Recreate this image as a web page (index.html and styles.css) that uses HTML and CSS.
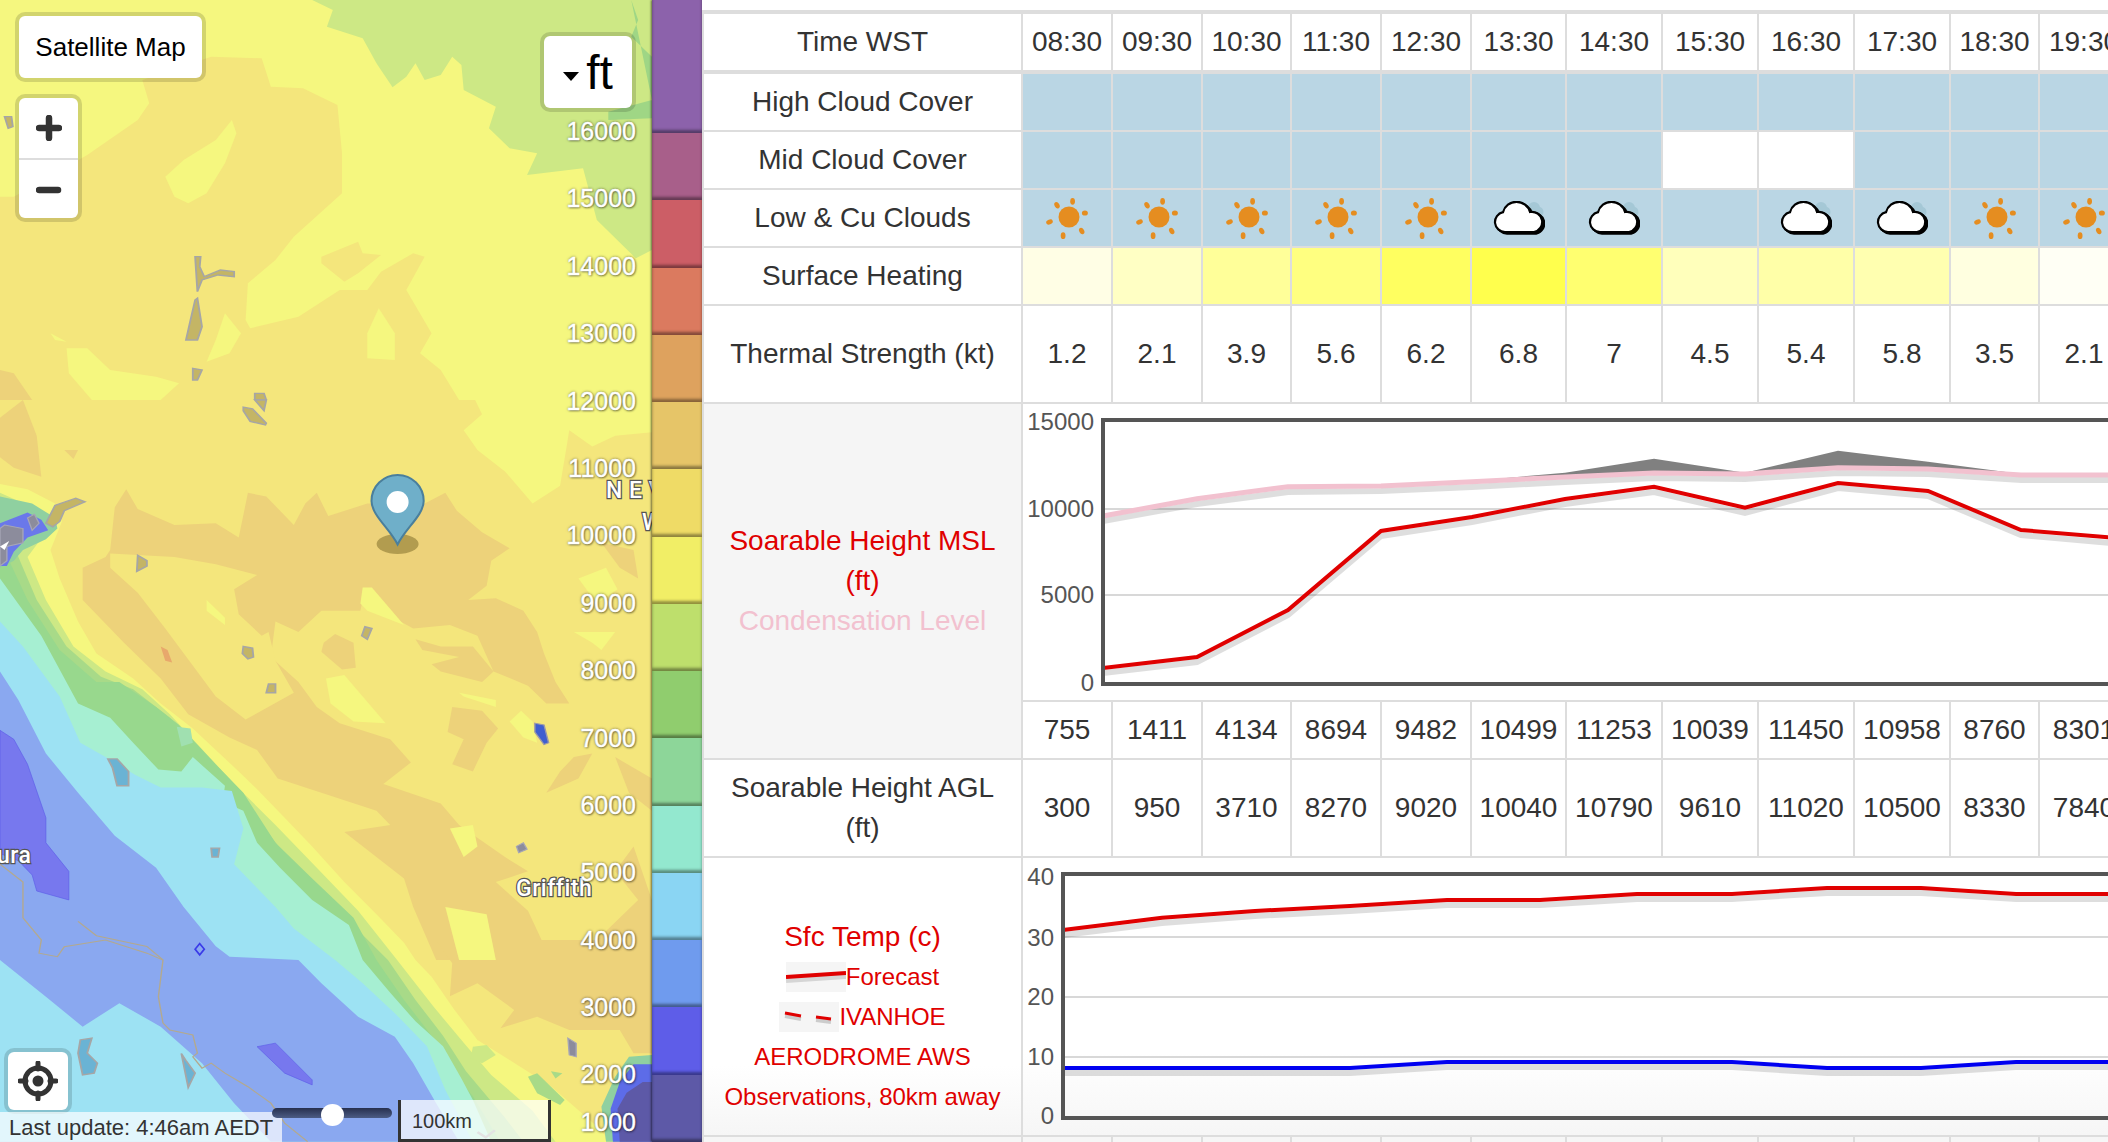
FILE: index.html
```html
<!DOCTYPE html>
<html lang="en">

<head>
	<meta charset="UTF-8">
	<title>Soaring Forecast</title>
	<link rel="stylesheet" href="styles.css">
</head>

<body>
	<svg class="defs" width="0" height="0">
		<symbol id="sun" viewBox="-2 1 50 50">
			<circle cx="25" cy="25" r="10.5" fill="#e58d20" />
			<g fill="#e58d20">
				<ellipse cx="28.6" cy="9.3" rx="2.4" ry="3.4" />
				<ellipse cx="13" cy="13.3" rx="2.4" ry="3.4" transform="rotate(-30 13 13.3)" />
				<ellipse cx="40.9" cy="21" rx="3" ry="2.6" />
				<ellipse cx="5.5" cy="30" rx="3.4" ry="2.4" transform="rotate(-20 5.5 30)" />
				<ellipse cx="37.7" cy="39" rx="2.4" ry="3.4" transform="rotate(-30 37.7 39)" />
				<ellipse cx="19.1" cy="43.7" rx="2.4" ry="3.4" />
			</g>
		</symbol>
		<symbol id="cloud" viewBox="0 0 52 34">
			<circle cx="41" cy="7" r="6" fill="#a5c8d6" />
			<circle cx="45" cy="11" r="5.5" fill="#a5c8d6" />
			<path d="M12 31a10 10 0 0 1-2-19.8A14 14 0 0 1 37 11a10 10 0 0 1 4 20z" fill="#000" stroke="#000" stroke-width="2.4" transform="translate(2 1.5)" />
			<path d="M12 31a10 10 0 0 1-2-19.8A14 14 0 0 1 37 11a10 10 0 0 1 4 20z" fill="#fff" stroke="#000" stroke-width="2.2" />
		</symbol>
	</svg>

	<div class="page">
		<div class="map">
			<svg class="map-canvas" viewBox="0 0 703 1142" width="703" height="1142">
				<rect width="703" height="1142" fill="#f5f77f" />

				<g class="soft" transform="scale(.4591,.3333)">
					<polygon fill="#cde885" points="680,0 725,30 712,80 790,115 820,190 855,262 885,230 905,190 925,240 960,225 985,170 1005,195 1010,270 1080,320 1065,385 1110,445 1170,460 1148,525 1270,505 1300,660 1385,775 1420,750 1420,0" />
					<polygon fill="#9fd685" points="1375,0 1390,60 1375,110 1420,170 1420,355 1325,360 1325,335 1420,300" />
					<polygon class="oy" points="0,590 30,590 190,465 300,360 325,310 310,240 460,170 570,175 590,260 660,265 735,315 745,460 745,580 640,710 600,780 540,850 535,960 545,985 650,950 740,870 800,870 830,815 900,760 925,770 885,870 940,1000 915,1060 960,1110 1000,1200 0,1200" />
					<polygon class="yl" points="505,360 515,400 490,490 450,580 410,610 380,590 360,530 400,480 470,420" />
					<polygon class="yl" points="145,1045 190,1045 240,1110 340,1130 390,1150 350,1200 200,1200 150,1120" />
					<polygon class="yl" points="110,1000 145,1025 120,1020" />
					<polygon class="yl" points="490,940 525,1000 500,1060 450,1085 470,1020" />
					<polygon class="yl" points="825,925 860,1000 860,1080 800,1075 800,1000" />
					<polygon class="oy" points="700,770 780,725 790,760 830,765 780,820 750,845 700,790" />
					<polygon class="or" points="0,1110 30,1120 70,1200 0,1200" />
					<polygon class="lake" points="425,770 437,770 435,800 445,830 480,810 510,815 510,830 475,825 440,840 430,875" />
					<polygon class="lake" points="425,900 430,895 440,980 430,1020 405,1020 415,960" />
					<polygon class="lake" points="420,1105 440,1110 430,1140 420,1140" />
					<polygon class="lake" points="555,1180 575,1180 580,1200 555,1200" />
					<polygon class="lake" points="10,350 25,350 28,380 18,385" />
				</g>

				<g class="soft" transform="translate(0,400) scale(.4591,.3571)">
					<polygon class="oy" points="0,0 1420,0 1420,2077 1330,2077 1300,2034 1200,1922 1110,1848 1040,1792 990,1708 940,1615 905,1568 880,1520 820,1440 750,1350 680,1250 620,1170 560,1090 520,1040 470,980 420,920 350,850 290,780 210,710 170,620 130,500 110,420 135,340 120,290 60,250 0,235" />
					<polygon class="yl" points="1035,0 1050,40 1010,85 1040,140 1100,200 1160,290 1220,240 1240,85 1290,130 1340,100 1420,90 1420,0" />
					<polygon class="or" points="0,50 50,0 80,100 90,215 30,190 0,160" />
					<polygon class="or" points="250,300 275,250 300,305 380,350 470,345 520,385 540,260 580,270 640,350 665,290 690,260 715,325 800,290 925,290 970,260 995,310 1050,370 1110,415 1070,450 1060,520 1020,560 1080,555 1140,590 1170,650 1185,710 1210,790 1240,850 1190,850 1150,800 1075,760 1040,660 980,630 900,640 830,590 790,560 785,590 700,590 650,650 600,620 590,720 650,790 690,860 740,905 850,950 895,1015 835,1075 960,1130 1000,1190 1100,1280 1150,1320 1080,1350 1150,1430 1200,1568 950,1568 900,1420 880,1340 750,1210 850,1190 820,1150 700,1100 605,1060 560,980 500,945 410,880 350,780 270,680 180,560 180,470 230,440 240,420" />
					<polygon class="oy" points="240,430 380,440 470,460 560,490 510,530 520,600 570,660 585,650 600,730 640,820 535,895 470,830 360,640 300,540 240,470" />
					<polygon class="or" points="705,680 730,655 770,680 775,750 745,755 700,705" />
					<polygon class="or" points="905,670 960,690 1030,690 1075,760 1050,790 960,760 940,740 1000,720 920,700" />
					<polygon class="or" points="985,860 1050,870 1085,920 1060,960 1030,1040 985,1020 1010,950 975,930" />
					<polygon class="or" points="1340,1000 1420,1060 1420,1150 1370,1100" />
					<polygon class="or" points="1250,1000 1290,990 1260,1060 1190,1100 1220,1040" />
					<polygon class="or" points="1310,400 1380,420 1390,500 1350,470" />
					<polygon class="or" points="140,140 170,140 160,165" />
					<polygon class="or" points="950,1512 985,1577 980,1670 1040,1633 1120,1708 1090,1759 1170,1727 1240,1764 1350,1764 1380,1829 1420,1829 1420,1400 1380,1250 1340,1320 1390,1400 1300,1512" />
					<polygon class="yl" points="710,780 750,770 840,905 770,900 720,850" />
					<polygon class="yl" points="790,525 810,525 880,630 800,590 785,570" />
					<polygon class="yl" points="1110,900 1135,870 1160,900 1170,960 1140,945" />
					<polygon class="yl" points="980,1200 1030,1190 1040,1250 1010,1280" />
					<polygon class="yl" points="1260,500 1320,470 1345,530 1300,570" />
					<polygon class="yl" points="1250,650 1340,650 1310,700 1290,680" />
					<polygon class="yl" points="1000,820 1080,840 1080,860 1010,830" />
					<polygon class="yl" points="970,1420 1060,1440 1080,1568 1000,1568" />
					<polygon class="yl" points="450,560 490,610 490,630 450,590" />
					<polygon fill="#e8a86c" points="350,690 365,700 375,735 360,730" />

					<polygon fill="#cde885" points="0,260 70,300 100,370 60,440 100,560 160,690 230,760 310,810 370,880 420,950 510,1075 600,1190 690,1310 780,1430 865,1568 945,1700 1010,1800 1070,1890 1160,1990 1210,2077 0,2077" />
					<polygon fill="#a8da88" points="0,290 40,440 80,560 145,690 220,775 290,810 340,860 370,890 415,960 500,1080 570,1190 650,1320 745,1440 845,1568 905,1680 965,1780 1015,1880 1100,2010 1140,2077 0,2077" />
					<polygon fill="#98d88d" points="20,450 60,560 130,700 210,790 260,790 340,860 390,910 470,1020 530,1100 600,1240 680,1340 770,1450 820,1568 880,1680 940,1780 985,1880 1030,1950 1090,2077 0,2077 0,450" />
					<polygon fill="#a6efd2" points="0,500 90,660 170,850 240,890 290,960 345,1035 395,1040 420,1000 490,1080 485,1125 530,1150 560,1240 610,1310 680,1400 760,1470 790,1568 850,1660 905,1740 965,1810 1005,1900 1030,1960 1070,2077 0,2077" />
					<polygon fill="#a0e0b0" points="385,915 415,920 420,960 395,970" />
					<polygon fill="#9de2f3" points="0,620 50,690 130,830 175,960 230,1000 295,1050 350,1085 440,1085 505,1095 530,1200 510,1300 600,1420 640,1480 730,1568 790,1633 860,1717 930,1810 970,1932 1000,2006 1030,2077 0,2077" />
					<polygon fill="#8aa8f0" points="0,760 40,840 100,990 170,1100 250,1220 340,1310 400,1420 470,1530 500,1559 650,1568 700,1633 780,1727 860,1783 900,1857 950,1969 1000,2077 0,2077" />
					<polygon fill="#9de2f3" points="0,1568 100,1671 180,1755 260,1689 350,1755 440,1857 510,1969 590,2077 0,2077" />
					<polygon class="deep" points="0,925 30,950 60,1020 100,1170 100,1240 150,1320 150,1400 80,1375 70,1330 40,1290 0,1270" />
					<polygon class="deep" points="560,1811 600,1801 680,1904 680,1918 620,1885" />

					<polygon fill="#cde885" points="1030,1811 1060,1806 1080,1834 1050,1857 1025,1843" />
					<polygon fill="#a8da88" points="1150,1895 1170,1885 1230,1960 1220,1974 1170,1941" />
					<polygon fill="#a8da88" points="1200,1880 1225,1885 1210,1900" />

					<polygon fill="#8fd0a0" points="1370,1839 1420,1834 1420,2077 1320,2077 1310,1979 1340,1895" />
					<polygon fill="#5d6ce8" points="1380,1860 1420,1860 1420,2077 1335,2077 1330,1985 1350,1910" />
					<polygon fill="#5d59a7" points="1400,1910 1420,1910 1420,2077 1350,2077 1345,1985 1365,1940" />

					<polygon fill="#8fd0a0" points="0,270 70,290 120,330 125,360 100,390 50,420 30,450 0,470" />
					<polygon fill="#6a78ea" points="0,345 60,315 90,335 105,365 60,385 30,425 15,465 0,465" />
					<polygon class="gray" points="10,350 50,360 50,400 15,410 15,450 0,465 0,360" />
					<polygon class="gray" points="60,330 75,320 85,345 70,365" />
					<polygon class="lake" points="120,295 165,275 185,285 140,310 130,340 115,355 100,345" />
					<polygon fill="#fff" points="0,410 20,395 10,420" />

					<polygon class="lake" points="300,435 320,450 320,465 298,480" />
					<polygon class="lake" points="530,690 550,695 552,720 540,725 528,710" />
					<polygon class="lake" points="585,795 600,795 600,820 580,820" />
					<polygon class="lake" points="795,635 810,640 800,670 788,660" />
					<polygon class="lake" points="530,20 550,25 580,65 578,70 545,60 530,30" />
					<polygon class="lake" points="555,0 580,0 575,30" />
					<polygon fill="#3f5fd0" stroke="#99a" stroke-width="3" points="1165,905 1185,910 1195,960 1185,965 1165,930" />
					<polygon class="gray" points="1125,1250 1140,1240 1148,1258 1130,1268" />
					<polygon class="water" points="460,1255 478,1255 475,1280 462,1280" />
					<polygon class="water" points="235,1005 255,1005 280,1040 280,1080 255,1080 245,1030" />
					<polygon class="water" points="175,1792 200,1787 190,1829 212,1857 205,1885 180,1890 170,1829" />
					<polygon class="water" points="395,1830 405,1850 425,1885 410,1925" />
					<polygon class="gray" points="1237,1787 1255,1801 1255,1839 1240,1834" />

					<polyline class="border-line" points="0,1300 50,1350 50,1450 90,1512 85,1549 125,1559 140,1531 230,1512 320,1549 355,1568 345,1671 355,1745 370,1764 420,1778 430,1829 420,1839 440,1871 460,1857 490,1885 540,1923 590,1969 620,2025 670,2077" />
					<polyline class="border-line" points="170,1460 210,1500 320,1530 355,1568" />
					<polygon fill="#8aa8f0" stroke="#3a3ae8" stroke-width="4" points="435,1522 445,1538 435,1554 425,1538" />
					<polyline fill="none" stroke="#999" stroke-width="6" points="1040,2050 1058,2065 1078,2045" />
				</g>

				<text class="map-label" x="606" y="498">N E V</text>
				<text class="map-label" x="642" y="530">W</text>
				<text class="map-label" x="-3" y="863">ura</text>
				<text class="map-label" x="516" y="896">Griffith</text>

				<ellipse cx="397.6" cy="544" rx="21" ry="10" fill="#5a4a10" fill-opacity=".4" />
				<path d="M397.6 544.5C390 529 371.500 515 371.500 501a26 26 0 0 1 52.200 0C423.700 515 405 529 397.600 544.500z" fill="#6fafc9" stroke="#4a7f9c" stroke-width="2" />
				<circle cx="397.6" cy="502" r="11" fill="#fff" />
			</svg>

			<div class="scale-bar">
				<div class="scale-seg seg-purple"></div>
				<div class="scale-seg seg-plum"></div>
				<div class="scale-seg seg-red"></div>
				<div class="scale-seg seg-coral"></div>
				<div class="scale-seg seg-tan"></div>
				<div class="scale-seg seg-sand"></div>
				<div class="scale-seg seg-gold"></div>
				<div class="scale-seg seg-yellow"></div>
				<div class="scale-seg seg-lime"></div>
				<div class="scale-seg seg-green"></div>
				<div class="scale-seg seg-jade"></div>
				<div class="scale-seg seg-mint"></div>
				<div class="scale-seg seg-sky"></div>
				<div class="scale-seg seg-blue"></div>
				<div class="scale-seg seg-indigo"></div>
				<div class="scale-seg seg-slate"></div>
			</div>

			<div class="scale-labels">
				<span>16000</span>
				<span>15000</span>
				<span>14000</span>
				<span>13000</span>
				<span>12000</span>
				<span>11000</span>
				<span>10000</span>
				<span>9000</span>
				<span>8000</span>
				<span>7000</span>
				<span>6000</span>
				<span>5000</span>
				<span>4000</span>
				<span>3000</span>
				<span>2000</span>
				<span class="last-label">1000</span>
			</div>

			<div class="map-controls">
				<div class="map-btn sat-btn">Satellite Map</div>
				<div class="map-btn zoom-btns">
					<div class="zoom-btn">
						<svg width="26" height="26" viewBox="0 0 26 26">
							<path d="M3 13H23M13 3V23" stroke="#333" stroke-width="6.500" stroke-linecap="round" />
						</svg>
					</div>
					<div class="zoom-btn zoom-out">
						<svg width="26" height="26" viewBox="0 0 26 26">
							<path d="M3 13H22" stroke="#333" stroke-width="6.500" stroke-linecap="round" />
						</svg>
					</div>
				</div>
			</div>

			<div class="map-btn unit-btn">
				<span class="caret"></span>
				<span>ft</span>
			</div>

			<div class="map-btn locate-btn">
				<svg width="40" height="40" viewBox="0 0 40 40">
					<circle cx="20" cy="20" r="13" fill="none" stroke="#333" stroke-width="5" />
					<circle cx="20" cy="20" r="5.500" fill="#333" />
					<path d="M20 2V8M20 32V38M2 20H8M32 20H38" stroke="#333" stroke-width="5" stroke-linecap="round" />
				</svg>
			</div>

			<div class="map-foot">
				<div class="last-update">Last update: 4:46am AEDT</div>
				<div class="slider"><div class="slider-thumb"></div></div>
				<div class="scale-box">100km</div>
			</div>
		</div>

		<div class="forecast">
			<table class="forecast-table">
				<colgroup>
					<col class="col-label">
					<col class="col-a"><col class="col-a"><col class="col-b"><col class="col-a"><col class="col-a">
					<col class="col-c"><col class="col-d"><col class="col-d"><col class="col-d"><col class="col-d">
					<col class="col-b"><col class="col-a">
				</colgroup>
				<tbody>
					<tr class="row-time">
						<th>Time WST</th>
						<td>08:30</td><td>09:30</td><td>10:30</td><td>11:30</td><td>12:30</td><td>13:30</td><td>14:30</td><td>15:30</td><td>16:30</td><td>17:30</td><td>18:30</td><td>19:30</td>
					</tr>
					<tr class="row-short">
						<th>High Cloud Cover</th>
						<td class="cloud"></td><td class="cloud"></td><td class="cloud"></td><td class="cloud"></td><td class="cloud"></td><td class="cloud"></td><td class="cloud"></td><td class="cloud"></td><td class="cloud"></td><td class="cloud"></td><td class="cloud"></td><td class="cloud"></td>
					</tr>
					<tr class="row-short">
						<th>Mid Cloud Cover</th>
						<td class="cloud"></td><td class="cloud"></td><td class="cloud"></td><td class="cloud"></td><td class="cloud"></td><td class="cloud"></td><td class="cloud"></td><td></td><td></td><td class="cloud"></td><td class="cloud"></td><td class="cloud"></td>
					</tr>
					<tr class="row-short">
						<th>Low &amp; Cu Clouds</th>
						<td class="cloud"><svg class="icon-sun"><use href="#sun" /></svg></td>
						<td class="cloud"><svg class="icon-sun"><use href="#sun" /></svg></td>
						<td class="cloud"><svg class="icon-sun"><use href="#sun" /></svg></td>
						<td class="cloud"><svg class="icon-sun"><use href="#sun" /></svg></td>
						<td class="cloud"><svg class="icon-sun"><use href="#sun" /></svg></td>
						<td class="cloud"><svg class="icon-cloud"><use href="#cloud" /></svg></td>
						<td class="cloud"><svg class="icon-cloud"><use href="#cloud" /></svg></td>
						<td class="cloud"></td>
						<td class="cloud"><svg class="icon-cloud"><use href="#cloud" /></svg></td>
						<td class="cloud"><svg class="icon-cloud"><use href="#cloud" /></svg></td>
						<td class="cloud"><svg class="icon-sun"><use href="#sun" /></svg></td>
						<td class="cloud"><svg class="icon-sun"><use href="#sun" /></svg></td>
					</tr>
					<tr class="row-short">
						<th>Surface Heating</th>
						<td class="heat-1"></td><td class="heat-2"></td><td class="heat-3"></td><td class="heat-4"></td><td class="heat-5"></td><td class="heat-6"></td><td class="heat-7"></td><td class="heat-8"></td><td class="heat-9"></td><td class="heat-10"></td><td class="heat-11"></td><td class="heat-12"></td>
					</tr>
					<tr class="row-tall">
						<th>Thermal Strength (kt)</th>
						<td>1.2</td><td>2.1</td><td>3.9</td><td>5.6</td><td>6.2</td><td>6.8</td><td>7</td><td>4.5</td><td>5.4</td><td>5.8</td><td>3.5</td><td>2.1</td>
					</tr>
					<tr class="row-chart-a">
						<th rowspan="2" class="label-grey">
							<div class="red">Soarable Height MSL<br>(ft)</div>
							<div class="pink">Condensation Level</div>
						</th>
						<td colspan="12" class="chart-cell">
							<svg class="chart" viewBox="1023 404 1107 296" width="1107" height="296">
								<line class="grid" x1="1103" y1="509" x2="2130" y2="509" />
								<line class="grid" x1="1103" y1="595" x2="2130" y2="595" />
								<polygon fill="#808080" points="1472,481 1565,472.700 1654,458.700 1745,472.700 1838,450.700 1928,461.700 2021,474 1928,469 1838,467.700 1745,474 1654,473 1565,477" />
								<polyline class="shadow" points="1103,521 1197,504 1288,492 1381,491 1472,487 1565,482 1654,478 1745,479 1838,473 1928,474 2021,480 2112,480" />
								<polyline class="line-pink" points="1103,516 1197,498.700 1288,486.700 1381,486 1472,481.700 1565,477 1654,473 1745,474 1838,467.700 1928,469 2021,475 2112,475" />
								<polyline class="shadow" points="1103,673 1197,662 1288,615 1381,536 1472,522 1565,504 1654,492 1745,513 1838,488 1928,496 2021,535 2112,543" />
								<polyline class="line-red" points="1103,668 1197,657 1288,610 1381,531 1472,517 1565,499 1654,486.700 1745,507.700 1838,483 1928,491 2021,530 2112,537.700" />
								<rect class="frame" x="1103" y="420" width="1100" height="264" />
								<text class="tick" x="1094" y="430">15000</text>
								<text class="tick" x="1094" y="517">10000</text>
								<text class="tick" x="1094" y="603">5000</text>
								<text class="tick" x="1094" y="691">0</text>
							</svg>
						</td>
					</tr>
					<tr class="row-short">
						<td>755</td><td>1411</td><td>4134</td><td>8694</td><td>9482</td><td>10499</td><td>11253</td><td>10039</td><td>11450</td><td>10958</td><td>8760</td><td>8301</td>
					</tr>
					<tr class="row-tall">
						<th>Soarable Height AGL<br>(ft)</th>
						<td>300</td><td>950</td><td>3710</td><td>8270</td><td>9020</td><td>10040</td><td>10790</td><td>9610</td><td>11020</td><td>10500</td><td>8330</td><td>7840</td>
					</tr>
					<tr class="row-chart-b">
						<th class="label-temp">
							<div class="red">Sfc Temp (c)</div>
							<div class="legend-line">
								<svg class="legend-sample" viewBox="0 0 60 30">
									<polyline class="shadow" points="0,18 60,14" />
									<polyline class="line-red" points="0,15 60,11" />
								</svg>Forecast
							</div>
							<div class="legend-line">
								<svg class="legend-sample" viewBox="0 0 60 30">
									<path d="M6 14L22 17M37 18L52 20" fill="none" stroke="#ccc" stroke-width="4" />
									<path d="M6 11L22 14M37 15L52 17" fill="none" stroke="#e00000" stroke-width="3" />
								</svg>IVANHOE
							</div>
							<div class="legend-line">AERODROME AWS</div>
							<div class="legend-line">Observations, 80km away</div>
						</th>
						<td colspan="12" class="chart-cell">
							<svg class="chart" viewBox="1023 858 1107 277" width="1107" height="277">
								<line class="grid" x1="1063" y1="937" x2="2130" y2="937" />
								<line class="grid" x1="1063" y1="997" x2="2130" y2="997" />
								<line class="grid" x1="1063" y1="1057" x2="2130" y2="1057" />
								<polyline class="shadow" points="1063,935 1162,923 1255,916 1350,911 1447,905 1540,905 1637,899 1732,899 1827,893 1921,893 2016,899 2112,899" />
								<polyline class="line-red" points="1063,930 1162,917.700 1255,911 1350,906 1447,900 1540,900 1637,894 1732,894 1827,888 1921,888 2016,894 2112,894" />
								<polyline class="shadow" points="1063,1073 1350,1073 1447,1067 1732,1067 1827,1073 1921,1073 2016,1067 2112,1067" />
								<polyline class="line-blue" points="1063,1068 1350,1068 1447,1062 1732,1062 1827,1068 1921,1068 2016,1062 2112,1062" />
								<rect class="frame" x="1063" y="874" width="1140" height="244" />
								<text class="tick" x="1054" y="885">40</text>
								<text class="tick" x="1054" y="946">30</text>
								<text class="tick" x="1054" y="1005">20</text>
								<text class="tick" x="1054" y="1065">10</text>
								<text class="tick" x="1054" y="1124">0</text>
							</svg>
						</td>
					</tr>
					<tr class="row-end">
						<th></th>
						<td></td><td></td><td></td><td></td><td></td><td></td><td></td><td></td><td></td><td></td><td></td><td></td>
					</tr>
				</tbody>
			</table>
		</div>
	</div>
</body>

</html>
```

FILE: styles.css
```css
html,
body {
	margin: 0;
	padding: 0;
	height: 100%;
	overflow: hidden;
	background: #fff;
	font-family: "Liberation Sans", Arial, sans-serif;
	color: #333;
}

.defs {
	position: absolute;
}

.page {
	display: flex;
	height: 1142px;
}

/* map side */
.map {
	position: relative;
	flex: 0 0 702px;
	width: 702px;
	height: 1142px;
	overflow: hidden;
}

.map-canvas {
	display: block;
}

.soft {
	filter: blur(1px);
}

.oy {
	fill: #f4e67c;
}

.yl {
	fill: #f5f77f;
}

.or {
	fill: #edd27a;
}

.deep {
	fill: #7778ee;
	stroke: #5a5ae8;
	stroke-width: 1.500;
}

.lake {
	fill: #c4b565;
	stroke: #a6a6a6;
	stroke-width: 4;
}

.gray {
	fill: #8c8c9c;
	stroke: #a6a6b6;
	stroke-width: 3;
}

.water {
	fill: #6ab3d4;
	stroke: #a6a6a6;
	stroke-width: 4;
}

.border-line {
	fill: none;
	stroke: #b3a98e;
	stroke-width: 3;
}

.map-label {
	font-family: Roboto, "Liberation Sans", sans-serif;
	font-size: 23px;
	font-weight: 500;
	fill: #fff;
	stroke: #555;
	stroke-width: 2.500px;
	paint-order: stroke;
	letter-spacing: .5px;
}

.scale-bar {
	position: absolute;
	top: 0;
	right: 0;
	width: 50px;
	height: 1142px;
	display: grid;
	grid-template-rows: 133px repeat(15, 1fr);
	box-shadow: -1px 0 2px rgba(0, 0, 0, .55);
}

.scale-seg {
	box-shadow: inset 0 -3px 3px rgba(0, 0, 0, .4);
}

.seg-purple { background: #8c62ab; }
.seg-plum { background: #a85f8a; }
.seg-red { background: #cc5e66; }
.seg-coral { background: #db7a5f; }
.seg-tan { background: #dea25e; }
.seg-sand { background: #e6c568; }
.seg-gold { background: #efdb66; }
.seg-yellow { background: #f1ee66; }
.seg-lime { background: #bedf6c; }
.seg-green { background: #90cd6e; }
.seg-jade { background: #8dd699; }
.seg-mint { background: #93e8cf; }
.seg-sky { background: #8ad5f3; }
.seg-blue { background: #6f9bee; }
.seg-indigo { background: #5e5de8; }
.seg-slate { background: #5d59a7; }

.scale-labels {
	position: absolute;
	top: 98px;
	right: 66px;
	display: flex;
	flex-direction: column;
	align-items: flex-end;
	font-size: 25px;
	color: #fff;
	-webkit-text-stroke: .4px #fff;
	text-shadow: 0 0 3px rgba(0, 0, 0, .6), 1px 1px 2px rgba(0, 0, 0, .4);
}

.scale-labels span {
	height: 67.400px;
	line-height: 67.400px;
}

.scale-labels .last-label {
	margin-top: -20px;
}

.map-btn {
	background: #fff;
	background-clip: padding-box;
	border: 4px solid rgba(0, 0, 0, .14);
	border-radius: 10px;
	box-sizing: border-box;
	color: #000;
}

.map-controls {
	position: absolute;
	top: 12px;
	left: 15px;
	display: flex;
	flex-direction: column;
	align-items: flex-start;
	gap: 12px;
}

.sat-btn {
	width: 191px;
	height: 70px;
	font-size: 26px;
	display: flex;
	align-items: center;
	justify-content: center;
}

.zoom-btns {
	width: 67px;
	height: 128px;
}

.zoom-btn {
	height: 60px;
	display: flex;
	align-items: center;
	justify-content: center;
}

.zoom-out {
	border-top: 2px solid #ddd;
}

.unit-btn {
	position: absolute;
	top: 32px;
	right: 66px;
	width: 96px;
	height: 80px;
	font-size: 48px;
	display: flex;
	align-items: center;
	justify-content: center;
	gap: 7px;
}

.caret {
	width: 0;
	height: 0;
	margin-top: 8px;
	border-left: 8px solid transparent;
	border-right: 8px solid transparent;
	border-top: 9px solid #000;
}

.locate-btn {
	position: absolute;
	left: 4px;
	bottom: 28px;
	width: 68px;
	height: 66px;
	display: flex;
	align-items: center;
	justify-content: center;
}

.map-foot {
	position: absolute;
	left: 0;
	bottom: 0;
	display: flex;
	align-items: flex-end;
}

.last-update {
	width: 282px;
	height: 30px;
	padding-left: 9px;
	box-sizing: border-box;
	background: rgba(255, 255, 255, .7);
	font-size: 22px;
	line-height: 32px;
	white-space: nowrap;
}

.slider {
	position: relative;
	width: 120px;
	height: 10px;
	margin: 0 6px 24px -10px;
	border-radius: 5px;
	background: linear-gradient(#27304f, #4c5c84);
}

.slider-thumb {
	position: absolute;
	left: 49px;
	top: -4px;
	width: 23px;
	height: 22px;
	border-radius: 50%;
	background: #fff;
}

.scale-box {
	width: 153px;
	height: 42px;
	box-sizing: border-box;
	padding-left: 11px;
	border: 3px solid #333;
	border-top: none;
	background: rgba(255, 255, 255, .72);
	font-size: 20px;
	line-height: 42px;
}

/* forecast table */
.forecast {
	flex: 1;
	min-width: 0;
	height: 1142px;
	overflow: hidden;
	padding-top: 10px;
	box-sizing: border-box;
}

.forecast-table {
	table-layout: fixed;
	width: 1427px;
	border-collapse: collapse;
	font-size: 28px;
	line-height: 40px;
}

.forecast-table th,
.forecast-table td {
	padding: 0;
	border: 2px solid #ddd;
	text-align: center;
	vertical-align: middle;
	font-weight: normal;
	overflow: hidden;
	white-space: nowrap;
}

.col-label { width: 319px; }
.col-a { width: 90px; }
.col-b { width: 89px; }
.col-c { width: 95px; }
.col-d { width: 96px; }

.row-time th,
.row-time td {
	height: 56px;
	border-top-width: 4px;
	border-bottom-width: 4px;
}

.row-short th,
.row-short td {
	height: 56px;
}

.row-tall th,
.row-tall td {
	height: 96px;
}

.forecast-table .row-tall th {
	line-height: 40px;
}

.cloud {
	background: #bad6e4;
}

.heat-1 { background: #fffee5; }
.heat-2 { background: #ffffc4; }
.heat-3 { background: #ffff99; }
.heat-4 { background: #ffff80; }
.heat-5 { background: #ffff60; }
.heat-6 { background: #ffff4d; }
.heat-7 { background: #ffff70; }
.heat-8 { background: #ffffbb; }
.heat-9 { background: #ffffa8; }
.heat-10 { background: #ffffb0; }
.heat-11 { background: #ffffe0; }
.heat-12 { background: #fffff5; }

.icon-sun {
	display: block;
	width: 50px;
	height: 50px;
	margin: 0 auto;
}

.icon-cloud {
	display: block;
	width: 52px;
	height: 34px;
	margin: 0 auto;
}

.label-grey {
	background: #f5f5f5;
}

.red {
	color: #e00000;
}

.pink {
	color: #f2c1cf;
}

.forecast-table .label-temp {
	padding-top: 40px;
	color: #e00000;
	background: linear-gradient(#fff 75%, #f6f6f6);
}

.legend-line {
	display: flex;
	align-items: center;
	justify-content: center;
	font-size: 24px;
	height: 40px;
}

.legend-sample {
	display: block;
	width: 60px;
	height: 30px;
	background: #f5f5f5;
}

.chart-cell {
	height: 277px;
}

.row-chart-a .chart-cell {
	height: 296px;
}

.row-chart-b .chart-cell {
	background: linear-gradient(#fff 70%, #f6f6f6);
}

.row-end th,
.row-end td {
	height: 40px;
	background: #f6f6f6;
}

.chart {
	display: block;
}

.grid {
	stroke: #d8d8d8;
	stroke-width: 2;
}

.frame {
	fill: none;
	stroke: #555;
	stroke-width: 4;
}

.tick {
	font-size: 24px;
	fill: #555;
	text-anchor: end;
}

.shadow {
	fill: none;
	stroke: rgba(0, 0, 0, .13);
	stroke-width: 6;
}

.line-red,
.line-pink,
.line-blue {
	fill: none;
	stroke-width: 4;
}

.line-red {
	stroke: #e00000;
}

.line-pink {
	stroke: #f2c1cf;
	stroke-width: 5;
}

.line-blue {
	stroke: #0000f0;
}
```
